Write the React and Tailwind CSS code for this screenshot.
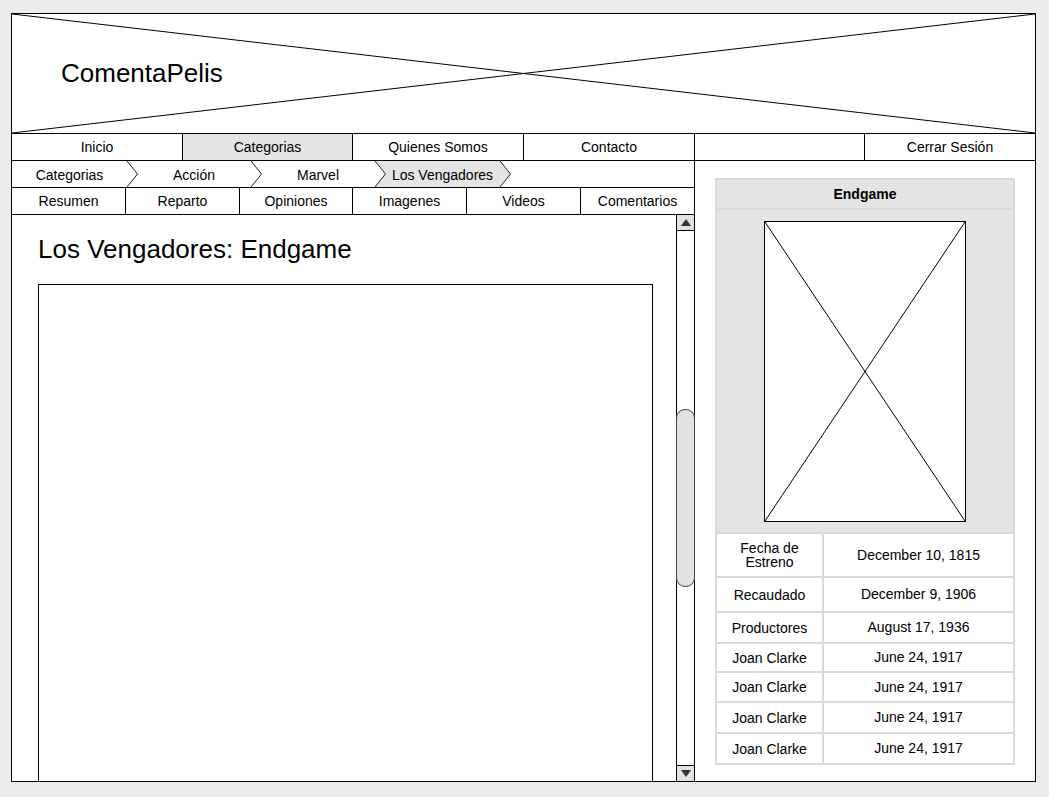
import React from "react";

const font = { fontFamily: '"Liberation Sans", Arial, sans-serif' };

function XBox({ className = "" }) {
  return (
    <svg className={className} preserveAspectRatio="none" viewBox="0 0 100 100">
      <line x1="0" y1="0" x2="100" y2="100" stroke="#000" strokeWidth="1" vectorEffect="non-scaling-stroke" />
      <line x1="0" y1="100" x2="100" y2="0" stroke="#000" strokeWidth="1" vectorEffect="non-scaling-stroke" />
    </svg>
  );
}

function Chevron() {
  return (
    <svg className="absolute top-0 left-full w-[12px] h-[26px] z-10" viewBox="0 0 12 26">
      <polyline points="0,0 10.5,13 0,26" fill="none" stroke="#222" strokeWidth="1" />
    </svg>
  );
}

const rows = [
  ["Fecha de Estreno", "December 10, 1815", "h-[44px]"],
  ["Recaudado", "December 9, 1906", "h-[35px]"],
  ["Productores", "August 17, 1936", "h-[31px]"],
  ["Joan Clarke", "June 24, 1917", "h-[29px]"],
  ["Joan Clarke", "June 24, 1917", "h-[30px]"],
  ["Joan Clarke", "June 24, 1917", "h-[31px]"],
  ["Joan Clarke", "June 24, 1917", "h-[29px]"],
];

export default function App() {
  return (
    <div className="w-[1049px] h-[797px] bg-[#ececec] pt-[13px] pl-[11px]" style={font}>
      <div className="w-[1025px] h-[769px] border border-black bg-white flex flex-col text-black">
        {/* Header */}
        <div className="relative h-[120px] border-b border-black flex items-center pl-[49px] shrink-0">
          <XBox className="absolute inset-0 w-full h-full" />
          <span className="relative text-[26px] leading-[30px] mt-[-1px]">ComentaPelis</span>
        </div>
        {/* Nav */}
        <div className="grid grid-cols-[171px_170px_171px_171px_170px_1fr] h-[27px] border-b border-black text-[14px] shrink-0">
          <div className="border-r border-black flex items-center justify-center">Inicio</div>
          <div className="border-r border-black bg-[#e4e4e4] flex items-center justify-center">Categorias</div>
          <div className="border-r border-black flex items-center justify-center">Quienes Somos</div>
          <div className="border-r border-black flex items-center justify-center">Contacto</div>
          <div className="border-r border-black"></div>
          <div className="flex items-center justify-center">Cerrar Sesión</div>
        </div>
        {/* Body */}
        <div className="flex flex-1 min-h-0">
          {/* Left column */}
          <div className="w-[683px] border-r border-black flex flex-col shrink-0">
            {/* Breadcrumb */}
            <div className="h-[27px] border-b border-black flex text-[14px] shrink-0">
              <div className="relative w-[115px] h-[26px] flex items-center justify-center pt-[2px]">
                <span>Categorias</span>
                <Chevron />
              </div>
              <div className="relative w-[124px] h-[26px] flex items-center justify-center pl-[10px] pt-[2px]">
                <span>Acción</span>
                <Chevron />
              </div>
              <div className="relative w-[124px] h-[26px] flex items-center justify-center pl-[10px] pt-[2px]">
                <span>Marvel</span>
              </div>
              <div className="relative w-[125px] h-[26px] flex items-center justify-center pl-[10px] pt-[2px]">
                <svg className="absolute top-0 left-0 w-[137px] h-[26px]" viewBox="0 0 137 26">
                  <polygon points="0,0 125,0 135.5,13 125,26 0,26 10.5,13" fill="#e4e4e4" stroke="none" />
                  <polyline points="0,0 10.5,13 0,26" fill="none" stroke="#222" strokeWidth="1" />
                  <polyline points="125,0 135.5,13 125,26" fill="none" stroke="#222" strokeWidth="1" />
                </svg>
                <span className="relative">Los Vengadores</span>
              </div>
            </div>
            {/* Tabs */}
            <div className="grid grid-cols-[114px_114px_113px_114px_114px_1fr] h-[27px] border-b border-black text-[14px] shrink-0">
              <div className="border-r border-black flex items-center justify-center">Resumen</div>
              <div className="border-r border-black flex items-center justify-center">Reparto</div>
              <div className="border-r border-black flex items-center justify-center">Opiniones</div>
              <div className="border-r border-black flex items-center justify-center">Imagenes</div>
              <div className="border-r border-black flex items-center justify-center">Videos</div>
              <div className="flex items-center justify-center">Comentarios</div>
            </div>
            {/* Content */}
            <div className="flex flex-1 min-h-0">
              <div className="flex-1 overflow-hidden pt-[19px] pl-[26px]">
                <h1 className="text-[26px] leading-[30px] h-[30px] whitespace-nowrap">Los Vengadores: Endgame</h1>
                <div className="mt-[20px] w-[615px] h-[600px] border border-black"></div>
              </div>
              <div className="w-[18px] border-l border-black flex flex-col shrink-0">
                <div className="h-[16px] bg-[#e2e2e2] border-b border-black flex items-center justify-center shrink-0">
                  <svg width="10" height="7" viewBox="0 0 10 7">
                    <polygon points="5,0 10,7 0,7" fill="#333" />
                  </svg>
                </div>
                <div className="flex-1 min-h-0">
                  <div className="relative mt-[178px] -ml-px w-[19px] h-[178px] rounded-[9px] border border-[#444] bg-[#e2e2e2]"></div>
                </div>
                <div className="h-[16px] bg-[#e2e2e2] border-t border-black flex items-center justify-center shrink-0">
                  <svg width="10" height="7" viewBox="0 0 10 7">
                    <polygon points="0,0 10,0 5,7" fill="#333" />
                  </svg>
                </div>
              </div>
            </div>
          </div>
          {/* Right panel */}
          <div className="flex-1 pt-[17px] pl-[20px]">
            <div className="w-[300px] border-2 border-[#d9d9d9] text-[14px]">
              <div className="h-[30px] bg-[#e4e4e4] border-b-2 border-[#d9d9d9] flex items-center justify-center font-bold pt-[1px]">
                Endgame
              </div>
              <div className="h-[324px] bg-[#e4e4e4] border-b-2 border-[#d9d9d9] pt-[11px] flex justify-center">
                <div className="relative w-[202px] h-[301px] border border-black bg-white">
                  <XBox className="absolute inset-0 w-full h-full" />
                </div>
              </div>
              {rows.map(([a, b, h], i) => (
                <div
                  key={i}
                  className={`flex ${h} ${i < rows.length - 1 ? "border-b-2 border-[#d9d9d9]" : ""}`}
                >
                  <div className="w-[107px] border-r-2 border-[#d9d9d9] flex items-center justify-center text-center leading-[14px] px-[10px]">
                    {a}
                  </div>
                  <div className="flex-1 flex items-center justify-center">{b}</div>
                </div>
              ))}
            </div>
          </div>
        </div>
      </div>
    </div>
  );
}
